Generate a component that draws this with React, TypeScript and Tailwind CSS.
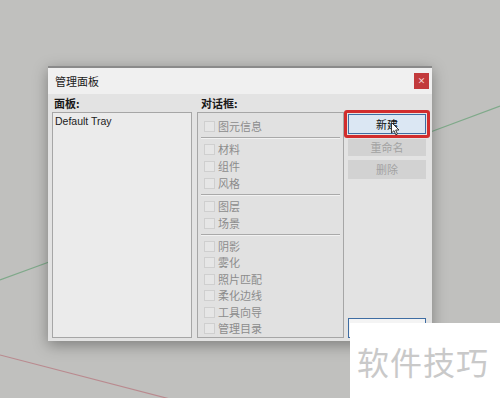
const cjk = { fontFamily: '"Noto Sans CJK SC", "Noto Sans", sans-serif' };

type Row = { label: string; h: string };

const groups: Row[][] = [
  [{ label: "图元信息", h: "h-[17px]" }],
  [
    { label: "材料", h: "h-[17px]" },
    { label: "组件", h: "h-[17px]" },
    { label: "风格", h: "h-[17px]" },
  ],
  [
    { label: "图层", h: "h-[17px]" },
    { label: "场景", h: "h-[17px]" },
  ],
  [
    { label: "阴影", h: "h-[16.5px]" },
    { label: "雾化", h: "h-[16.5px]" },
    { label: "照片匹配", h: "h-[16.5px]" },
    { label: "柔化边线", h: "h-[16.5px]" },
    { label: "工具向导", h: "h-[16.5px]" },
    { label: "管理目录", h: "h-[16.5px]" },
  ],
];

function CheckRow({ row }: { row: Row }) {
  return (
    <div className={`flex items-center gap-[3px] pl-[6px] ${row.h}`}>
      <span className="h-[11px] w-[11px] border border-[#cfcfcf] bg-[#e6e6e6]" />
      <span className="text-[11px] leading-none text-[#8c8c8c]">{row.label}</span>
    </div>
  );
}

function Separator() {
  return <div className="mx-[3px] my-[2px] h-[2px] border-t border-[#a9a9a9] border-b border-b-[#f2f2f2]" />;
}

export default function App() {
  return (
    <div className="relative h-[398px] w-[500px] overflow-hidden bg-[#c0c0be]" style={cjk}>
      <svg className="absolute inset-0" width="500" height="398">
        <line x1="0" y1="280" x2="60" y2="258" stroke="#7fa98a" strokeWidth="1.2" />
        <line x1="425" y1="134" x2="500" y2="106" stroke="#7fa98a" strokeWidth="1.2" />
        <line x1="0" y1="355" x2="170" y2="399" stroke="#b98a8f" strokeWidth="1.2" />
      </svg>

      <div className="relative pl-[48px] pt-[66px]">
        <div className="flex h-[275px] w-[384px] flex-col border-t-2 border-[#8a8a8a] bg-[#e3e3e3] shadow-[0_4px_14px_rgba(0,0,0,0.35)]">
          <div className="flex h-[26px] items-center justify-between bg-[#f0f0f0] pl-[7px] pr-[3px]">
            <span className="text-[11px] text-[#202020]">管理面板</span>
            <span className="flex h-[16px] w-[15px] items-center justify-center bg-[#c23a3c] text-[8px] font-bold leading-none text-[#f6dada]">
              ×
            </span>
          </div>

          <div className="flex flex-1 pb-[3px] pl-[4px]">
            <div className="flex w-[140px] flex-col">
              <div className="flex h-[18px] items-center pl-[2px] text-[11px] font-bold text-[#1a1a1a]">面板:</div>
              <div className="flex-1 border border-[#a6a6a6] bg-[#ebebeb] px-[2px] pt-[3px] text-[10.5px] leading-none text-[#222]">
                <span style={{ fontFamily: '"Liberation Sans", sans-serif' }}>Default Tray</span>
              </div>
            </div>

            <div className="ml-[5px] flex w-[147px] flex-col">
              <div className="flex h-[18px] items-center pl-[4px] text-[11px] font-bold text-[#1a1a1a]">对话框:</div>
              <div className="flex-1 border border-[#a6a6a6] bg-[#e1e1e1] pt-[5px]">
                {groups.map((g, i) => (
                  <div key={i}>
                    {i > 0 && <Separator />}
                    {g.map((r) => (
                      <CheckRow key={r.label} row={r} />
                    ))}
                  </div>
                ))}
              </div>
            </div>

            <div className="relative flex flex-1 flex-col items-start pt-[16px]">
              <div className="rounded-[3px] border-[3px] border-[#d12d2d] p-[1px]">
                <div className="relative flex h-[20px] w-[78px] items-center justify-center border border-[#3f6da3] bg-[#dbe7f3] text-[11px] text-[#111]">
                  新建
                  <svg className="absolute left-[42px] top-[7px]" width="9" height="14" viewBox="0 0 9 14">
                    <path d="M0.5 0.5 L0.5 11 L3 8.6 L4.8 12.8 L6.4 12.1 L4.7 8 L8 8 Z" fill="#fff" stroke="#222" strokeWidth="0.9" />
                  </svg>
                </div>
              </div>
              <div className="ml-[4px] mt-[1px] flex h-[17px] w-[78px] items-center justify-center bg-[#d2d2d2] text-[11px] text-[#a2a2a2]">
                重命名
              </div>
              <div className="ml-[4px] mt-[4px] flex h-[19px] w-[78px] items-center justify-center bg-[#d2d2d2] text-[11px] text-[#a2a2a2]">
                删除
              </div>
              <div className="ml-[4px] mt-auto h-[20px] w-[78px] border border-[#3f6da3] bg-[#f4f4f4]" />
            </div>
          </div>
        </div>
      </div>

      <div className="absolute bottom-0 right-0 flex h-[75px] w-[150px] items-center bg-white pl-[7px]">
        <span className="text-[32px] leading-none tracking-[1px] text-[#c9c9c9]">软件技巧</span>
      </div>
    </div>
  );
}
